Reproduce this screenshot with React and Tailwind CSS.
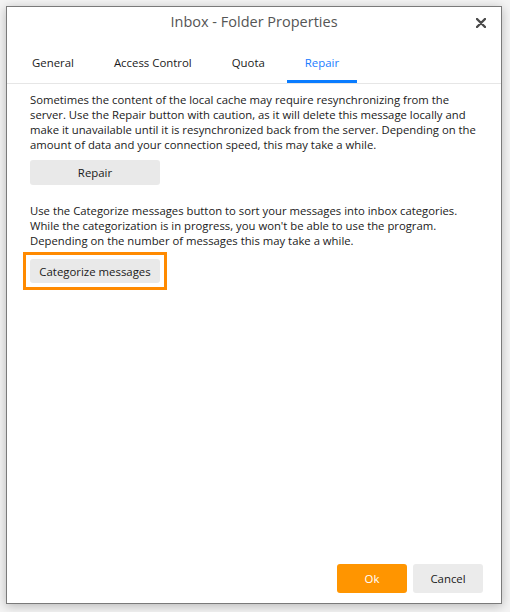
export default function App() {
  const tabs = ['General', 'Access Control', 'Quota', 'Repair']
  return (
    <div className="h-[612px] w-[510px] bg-[#f4f4f4] pt-[6px] pl-[6px]" style={{ fontFamily: '"Open Sans", "Noto Sans", sans-serif' }}>
      <div className="flex h-[598px] w-[496px] flex-col border border-[#7a7a7a] bg-white shadow-[0_2px_10px_rgba(0,0,0,0.25)]">
        {/* Title bar */}
        <div className="relative flex h-[30px] items-center justify-center">
          <span className="text-[14.5px] text-[#555]">Inbox - Folder Properties</span>
          <svg className="absolute right-[15px] top-[11px] h-[10px] w-[10px]" viewBox="0 0 10 10">
            <path d="M1 1 L9 9 M9 1 L1 9" stroke="#4a4a4a" strokeWidth="2.4" strokeLinecap="round" />
          </svg>
        </div>

        {/* Tabs */}
        <div className="mt-[6px] flex gap-[4px] border-b border-[#e6e6e6] pl-[7px]">
          {tabs.map((t) => (
            <div
              key={t}
              className={`flex h-[40px] items-center justify-center px-[18px] text-[11.4px] ${
                t === 'Repair' ? 'border-b-[3px] border-[#0a7cff] pt-[3px] text-[#1a7cff]' : 'text-[#1a1a1a]'
              }`}
            >
              {t}
            </div>
          ))}
        </div>

        {/* Content */}
        <div className="flex-1 pl-[23px] pr-[4px] pt-[8px] text-[11.3px] leading-[15px] text-[#1a1a1a]">
          <p className="whitespace-nowrap">
            Sometimes the content of the local cache may require resynchronizing from the<br />
            server. Use the Repair button with caution, as it will delete this message locally and<br />
            make it unavailable until it is resynchronized back from the server. Depending on the<br />
            amount of data and your connection speed, this may take a while.
          </p>
          <button className="mt-[8px] h-[25px] w-[130px] rounded-[3px] bg-[#e9e9e9] text-[11.4px] text-[#1a1a1a]">Repair</button>

          <p className="mt-[18px] whitespace-nowrap">
            Use the Categorize messages button to sort your messages into inbox categories.<br />
            While the categorization is in progress, you won't be able to use the program.<br />
            Depending on the number of messages this may take a while.
          </p>
          <div className="mt-[4px] ml-[-7px] inline-flex border-[3px] border-[#ff8a00] p-[4px]">
            <button className="h-[24px] w-[130px] rounded-[3px] bg-[#e9e9e9] text-[11.4px] text-[#1a1a1a]">Categorize messages</button>
          </div>
        </div>

        {/* Footer */}
        <div className="flex justify-end gap-[6px] pb-[10px] pr-[18px]">
          <button className="h-[29px] w-[70px] rounded-[3px] bg-[#ff9500] text-[11.4px] text-white">Ok</button>
          <button className="h-[29px] w-[70px] rounded-[3px] bg-[#ebebeb] text-[11.4px] text-[#1a1a1a]">Cancel</button>
        </div>
      </div>
    </div>
  )
}
